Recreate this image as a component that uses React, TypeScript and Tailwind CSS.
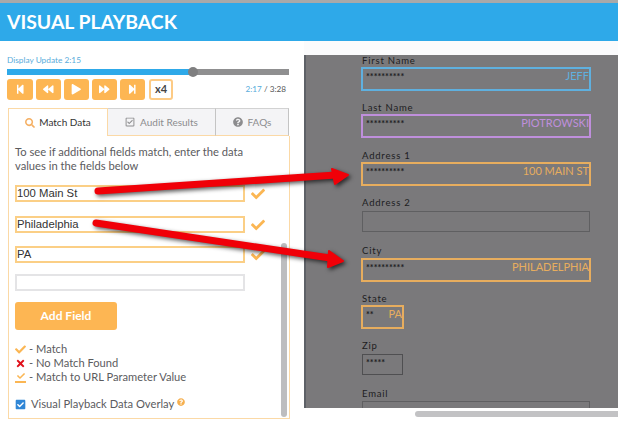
import { FaBackward, FaCheck, FaCheckSquare, FaForward, FaPlay, FaQuestionCircle, FaRegCheckSquare, FaSearch, FaStepBackward, FaStepForward, FaTimes } from "react-icons/fa";

const controls = [
  { icon: FaStepBackward, width: "w-[26px]" },
  { icon: FaBackward, width: "w-[25px]" },
  { icon: FaPlay, width: "w-[25px]" },
  { icon: FaForward, width: "w-[25px]" },
  { icon: FaStepForward, width: "w-[25px]" },
];

const DataInput = ({ value, matched, mb }: { value: string; matched: boolean; mb: string }) => (
  <div className={`flex items-center ${mb}`}>
    <div className={`w-[230px] h-[17px] border-2 ${matched ? "border-[#fbcf86]" : "border-[#e4e4e6]"} flex items-center text-[11.3px] font-['Liberation_Sans',sans-serif] text-[#333] bg-white`}>
      {value}
    </div>
    {matched && <FaCheck className="ml-[6px] text-[14px] text-[#fbb653]" />}
  </div>
);

const FormField = ({ label, stars, value, box, mb, labelMb = "mb-[1px]" }: { label: string; stars?: string; value?: string; box: string; mb: string; labelMb?: string }) => (
  <div className={mb}>
    <div className={`ml-[1px] text-[9.5px] leading-[11px] tracking-[0.8px] text-[#1d1d1f] ${labelMb}`}>{label}</div>
    <div className={`relative ${box}`}>
      <span className="absolute left-[3px] top-[2px] text-[9px] leading-[12px] font-bold text-[#1d1d1f]">{stars}</span>
      <span className="absolute right-0 top-0 text-[11px] leading-[13px] text-inherit whitespace-nowrap">{value}</span>
    </div>
  </div>
);

export default function App() {
  return (
    <div className="relative w-[618px] h-[425px] overflow-hidden bg-[#f6f6f9] font-['Lato','Open_Sans',sans-serif]">
      <div className="h-[3px] bg-[#a9a9a9]" />
      <header className="h-[38px] bg-[#2ea9e9] flex items-center pl-[7px] text-[19.4px] font-bold text-white">
        VISUAL PLAYBACK
      </header>

      <div className="flex">
        <div className="w-[304px] h-[384px] bg-white pt-[13px] pl-[7px] flex flex-col">
          <div className="text-[8.3px] leading-[13px] text-[#58acdb]">Display Update 2:15</div>
          <div className="relative w-[282px] h-[6px] mt-[2px] bg-[#8f8f90]">
            <div className="h-full w-[186px] bg-[#2ea9e9]" />
            <div className="absolute left-[181px] -top-[2px] w-[10px] h-[10px] rounded-full bg-[#7f7f80]" />
          </div>
          <div className="flex items-center gap-[3px] mt-[4px] w-[282px]">
            {controls.map(({ icon: Icon, width }, i) => (
              <div key={i} className={`${width} h-[21px] rounded-[3px] bg-[#fdb653] flex items-center justify-center text-white text-[10.5px]`}>
                <Icon />
              </div>
            ))}
            <div className="ml-[1px] w-[24px] h-[21px] rounded-[3px] border-2 border-[#fdcb85] flex items-center justify-center text-[11px] font-bold text-[#444]">x4</div>
            <div className="ml-auto pr-[3px] text-[8.2px] text-[#555]"><span className="text-[#58acdb]">2:17</span> / 3:28</div>
          </div>

          <div className="flex w-[282px] ml-[1px] mt-[8px] h-[28px] text-[10px]">
            <div className="w-[100px] flex items-center justify-center gap-[4px] border border-b-0 border-[#fbd9a6] text-[#333]">
              <FaSearch className="text-[#f5b064] text-[10px]" />
              Match Data
            </div>
            <div className="w-[108px] flex items-center justify-center gap-[5px] border-y border-r border-t-[#d2d2d2] border-r-[#c4c4c4] border-b-[#fbd9a6] bg-[#f4f4f6] text-[#8c8c8e]">
              <FaRegCheckSquare className="text-[10px]" />
              Audit Results
            </div>
            <div className="w-[73px] flex items-center justify-center gap-[5px] border-y border-r border-t-[#d2d2d2] border-r-[#c4c4c4] border-b-[#fbd9a6] bg-[#f4f4f6] text-[#8c8c8e]">
              <FaQuestionCircle className="text-[10px]" />
              FAQs
            </div>
          </div>

          <div className="relative w-[282px] ml-[1px] h-[283px] border-x border-b border-[#fbd9a6] pl-[6px] pt-[9px] text-[#5b5b5e]">
            <p className="text-[11.2px] leading-[14px] mb-[12px] w-[250px]">To see if additional fields match, enter the data values in the fields below</p>
            <DataInput value="100 Main St" matched mb="mb-[14px]" />
            <DataInput value="Philadelphia" matched mb="mb-[13px]" />
            <DataInput value="PA" matched mb="mb-[11px]" />
            <DataInput value="" matched={false} mb="mb-[11px]" />
            <button className="w-[102px] h-[28px] rounded-[3px] bg-[#fdb653] text-white text-[12px] font-bold">Add Field</button>
            <ul className="mt-[12px] text-[11.15px] leading-[14px]">
              <li className="flex items-center gap-[3px]"><FaCheck className="w-[11px] text-[#fbb653] text-[11px]" /> - Match</li>
              <li className="flex items-center gap-[3px]"><FaTimes className="w-[11px] text-[#e0111b] text-[11px]" /> - No Match Found</li>
              <li className="flex items-center gap-[3px]">
                <span className="w-[11px] flex flex-col items-center text-[#fbb653]"><FaCheck className="text-[8px]" /><span className="w-[11px] h-[2px] bg-[#fbb653] mt-[1px]" /></span>
                - Match to URL Parameter Value
              </li>
            </ul>
            <div className="flex items-center gap-[5px] mt-[13px] text-[11.2px] leading-[14px]">
              <FaCheckSquare className="text-[#2f86d6] text-[11px]" />
              Visual Playback Data Overlay
              <FaQuestionCircle className="text-[#f6b04f] text-[8px] -mt-[5px] -ml-[2px]" />
            </div>
            <div className="absolute left-[272px] top-[107px] w-[6px] h-[174px] rounded-full bg-[#bdbdbf]" />
          </div>
        </div>

        <div className="flex-1 flex flex-col">
          <div className="h-[14px] bg-[#fbfbfc]" />
          <div className="h-[353px] overflow-hidden bg-[#7a797b] border-l-[2px] border-[#5e6167] pl-[55px]">
            <FormField label="First Name" stars="**********" value="JEFF" box="w-[230px] h-[24px] border-2 border-[#5fb0df] text-[#5fb0df]" mb="mb-[11px]" />
            <FormField label="Last Name" stars="**********" value="PIOTROWSKI" box="w-[230px] h-[24px] border-2 border-[#bf8fdc] text-[#bf8fdc]" mb="mb-[12px]" />
            <FormField label="Address 1" stars="**********" value="100 MAIN ST" box="w-[230px] h-[24px] border-2 border-[#e7ad5e] text-[#e7ad5e]" mb="mb-[11px]" />
            <FormField label="Address 2" labelMb="mb-[3px]" box="ml-[1px] w-[228px] h-[21px] border border-[#5f5f61]" mb="mb-[13px]" />
            <FormField label="City" labelMb="mb-[2px]" stars="**********" value="PHILADELPHIA" box="w-[230px] h-[24px] border-2 border-[#e7ad5e] text-[#e7ad5e]" mb="mb-[11px]" />
            <FormField label="State" stars="**" value="PA" box="w-[43px] h-[24px] border-2 border-[#e7ad5e] text-[#e7ad5e]" mb="mb-[11px]" />
            <FormField label="Zip" labelMb="mb-[3px]" stars="*****" box="ml-[1px] w-[41px] h-[21px] border border-[#4f4f51]" mb="mb-[13px]" />
            <FormField label="Email" labelMb="mb-[2px]" box="ml-[1px] w-[228px] h-[21px] border border-[#5f5f61]" mb="mb-0" />
          </div>
          <div className="h-[17px] bg-white flex items-start justify-end pt-[3px]">
            <div className="w-[203px] h-[6px] rounded-l-full bg-[#c2c2c4]" />
          </div>
        </div>
      </div>

      {/* red annotation arrows */}
      <svg className="absolute left-0 top-0 pointer-events-none drop-shadow-[2px_2px_2px_rgba(0,0,0,0.65)]" width="618" height="425" viewBox="0 0 618 425">
        <path d="M98 191 L336 175" stroke="#f00008" strokeWidth="7" strokeLinecap="round" fill="none" />
        <path d="M332 169 L348 175 L335 184 Z" fill="#f00008" stroke="#f00008" strokeWidth="2" strokeLinejoin="round" />
        <path d="M96 223 L330 258" stroke="#f00008" strokeWidth="7" strokeLinecap="round" fill="none" />
        <path d="M329 251 L343 261 L328 267 Z" fill="#f00008" stroke="#f00008" strokeWidth="2" strokeLinejoin="round" />
      </svg>
    </div>
  );
}
